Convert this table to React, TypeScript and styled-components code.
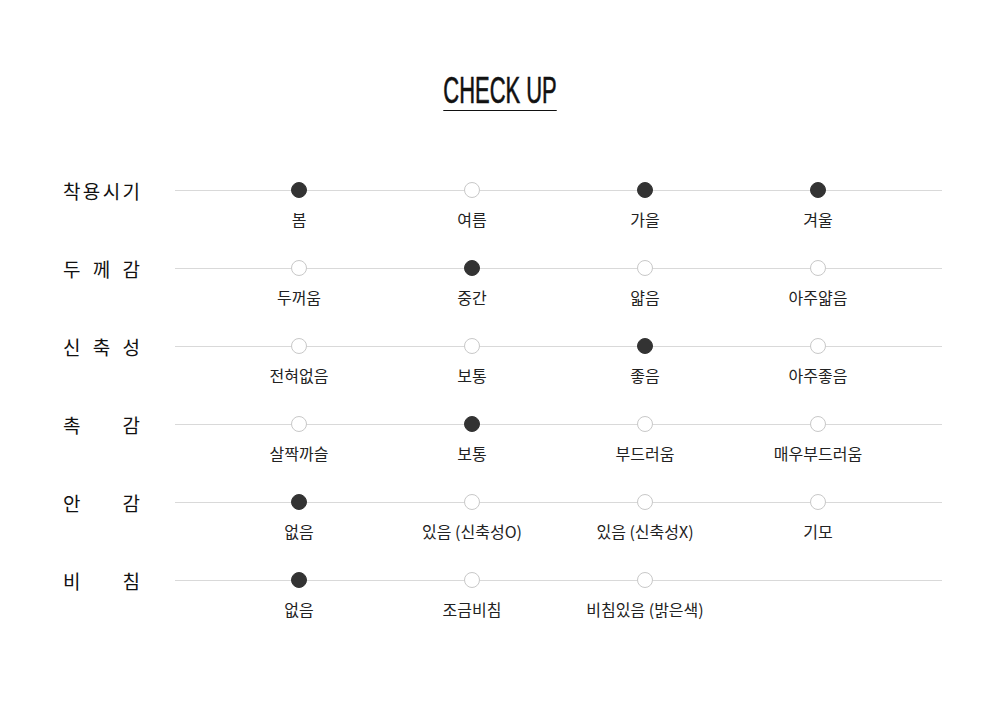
import styled, { createGlobalStyle } from 'styled-components';

const GlobalStyle = createGlobalStyle`
  html, body {
    margin: 0;
    padding: 0;
    background: #fff;
  }
  body {
    font-family: "Noto Sans CJK KR", "Noto Sans", sans-serif;
    color: #222;
  }
`;

const Page = styled.div`
  width: 1000px;
  height: 727px;
  padding-top: 72px;
  box-sizing: border-box;
`;

const TitleWrap = styled.div`
  display: flex;
  justify-content: center;
`;

// no condensed face installed, so squeeze a plain sans
const Title = styled.h2`
  margin: 0;
  font-family: "Liberation Sans", Arial, sans-serif;
  font-weight: 400;
  font-size: 36px;
  line-height: 38px;
  color: #111;
  border-bottom: 1.5px solid #111;
  transform: scaleX(0.61);
  transform-origin: center;
  -webkit-text-stroke: 0.6px #111;
`;

const Table = styled.div`
  margin-top: 71px;
  padding-left: 63px;
`;

const Row = styled.div`
  display: flex;
  height: 78px;
`;

const Label = styled.div`
  width: 77px;
  height: 16px;
  display: flex;
  justify-content: space-between;
  align-items: center;
  font-size: 19px;
  font-weight: 400;
  color: #111;
  margin-right: 35px;
`;

const Track = styled.div`
  position: relative;
  width: 767px;
  display: grid;
  grid-template-columns: repeat(4, 1fr);
  padding: 0 37.5px;
  box-sizing: border-box;
  align-content: start;

  &::before {
    content: '';
    position: absolute;
    left: 0;
    right: 0;
    top: 8px;
    height: 1px;
    background: #d9d9d9;
  }
`;

const Option = styled.div`
  display: flex;
  flex-direction: column;
  align-items: center;
  position: relative;
`;

const Dot = styled.span<{ $on: boolean }>`
  width: 16px;
  height: 16px;
  border-radius: 50%;
  box-sizing: border-box;
  background: ${(p) => (p.$on ? '#333' : '#fff')};
  border: 1px solid ${(p) => (p.$on ? '#333' : '#c8c8c8')};
`;

const Caption = styled.span`
  margin-top: 13px;
  font-size: 16px;
  line-height: 1;
  color: #222;
  white-space: nowrap;
`;

type Item = { label: string; options: string[]; checked: number[] };

const rows: Item[] = [
  { label: '착용시기', options: ['봄', '여름', '가을', '겨울'], checked: [0, 2, 3] },
  { label: '두께감', options: ['두꺼움', '중간', '얇음', '아주얇음'], checked: [1] },
  { label: '신축성', options: ['전혀없음', '보통', '좋음', '아주좋음'], checked: [2] },
  { label: '촉감', options: ['살짝까슬', '보통', '부드러움', '매우부드러움'], checked: [1] },
  { label: '안감', options: ['없음', '있음 (신축성O)', '있음 (신축성X)', '기모'], checked: [0] },
  { label: '비침', options: ['없음', '조금비침', '비침있음 (밝은색)'], checked: [0] },
];

export default function App() {
  return (
    <Page>
      <GlobalStyle />
      <TitleWrap>
        <Title>CHECK UP</Title>
      </TitleWrap>
      <Table>
        {rows.map((row) => (
          <Row key={row.label}>
            <Label>
              {row.label.split('').map((ch, i) => (
                <span key={i}>{ch}</span>
              ))}
            </Label>
            <Track>
              {row.options.map((opt, i) => (
                <Option key={opt + i}>
                  <Dot $on={row.checked.includes(i)} />
                  <Caption>{opt}</Caption>
                </Option>
              ))}
            </Track>
          </Row>
        ))}
      </Table>
    </Page>
  );
}
